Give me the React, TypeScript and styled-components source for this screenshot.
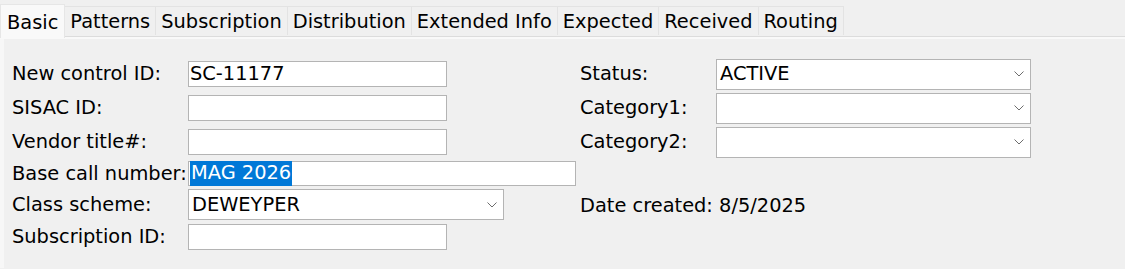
import { createGlobalStyle } from 'styled-components';
import styled from 'styled-components';

const GlobalStyle = createGlobalStyle`
  html, body {
    margin: 0;
    padding: 0;
    background: #f0f0f0;
  }
  body {
    font-family: 'DejaVu Sans', Verdana, sans-serif;
    font-size: 19.4px;
    color: #000;
  }
`;

const Window = styled.div`
  width: 1125px;
  height: 269px;
  background: #f0f0f0;
  overflow: hidden;
`;

const TabStrip = styled.div`
  display: flex;
  align-items: flex-end;
  height: 36px;
  padding-left: 1px;
`;

const Tab = styled.div<{ $active?: boolean }>`
  height: ${(p) => (p.$active ? 34 : 29)}px;
  margin-bottom: ${(p) => (p.$active ? -2 : 1)}px;
  padding: 2px ${(p) => (p.$active ? 6 : 5)}px 0;
  box-sizing: border-box;
  display: flex;
  align-items: center;
  background: ${(p) => (p.$active ? '#f9f9f9' : '#f0f0f0')};
  border: 1px solid ${(p) => (p.$active ? '#e6e6e6' : '#e3e3e3')};
  border-bottom: none;
  margin-left: -1px;
  position: relative;
  z-index: ${(p) => (p.$active ? 2 : 1)};
  white-space: nowrap;
  line-height: 1;
`;

const Panel = styled.div`
  border-top: 1px solid #dcdcdc;
  box-shadow: inset 0 2px 0 #f9f9f9, inset 4px 0 0 #f7f7f7;
  height: 232px;
  padding: 20px 0 0 12px;
  box-sizing: border-box;
`;

const Form = styled.div`
  display: grid;
  grid-template-columns: 176px 392px 136px 315px;
  grid-template-rows: 34px 34px 34px 29px 33px 32px;
  align-items: center;
`;

const Label = styled.div<{ $col?: number }>`
  grid-column: ${(p) => p.$col ?? 1};
  white-space: nowrap;
  line-height: 1;
`;

const TextBox = styled.div<{ $width: number; $height?: number }>`
  grid-column: 2;
  width: ${(p) => p.$width}px;
  height: ${(p) => p.$height ?? 26}px;
  box-sizing: border-box;
  background: #fff;
  border: 1px solid #b4b4b4;
  padding-left: 1px;
  display: flex;
  align-items: center;
  white-space: nowrap;
  line-height: 1;
`;

const Selected = styled.span`
  background: #0078d7;
  color: #fff;
  padding: 2px 1px 3px 1px;
`;

const Combo = styled.div<{ $col?: number; $width: number }>`
  grid-column: ${(p) => p.$col ?? 2};
  width: ${(p) => p.$width}px;
  height: 31px;
  box-sizing: border-box;
  background: #fff;
  border: 1px solid #b4b4b4;
  display: flex;
  align-items: center;
  justify-content: space-between;
  padding: 0 5px 0 3px;
  line-height: 1;
`;

const Chevron = () => (
  <svg width="12" height="8" viewBox="0 0 12 8">
    <path d="M1.5 1.5 L6 6 L10.5 1.5" fill="none" stroke="#6d6d6d" strokeWidth="1" />
  </svg>
);

const DateText = styled.div`
  grid-column: 3 / span 2;
  white-space: nowrap;
  line-height: 1;
  padding-top: 3px;
`;

const tabs = [
  'Basic',
  'Patterns',
  'Subscription',
  'Distribution',
  'Extended Info',
  'Expected',
  'Received',
  'Routing',
];

export default function App() {
  return (
    <Window>
      <GlobalStyle />
      <TabStrip>
        {tabs.map((t, i) => (
          <Tab key={t} $active={i === 0}>
            {t}
          </Tab>
        ))}
      </TabStrip>
      <Panel>
        <Form>
          <Label>New control ID:</Label>
          <TextBox $width={259}>SC-11177</TextBox>
          <Label $col={3}>Status:</Label>
          <Combo $col={4} $width={315}>
            <span>ACTIVE</span>
            <Chevron />
          </Combo>

          <Label>SISAC ID:</Label>
          <TextBox $width={259} />
          <Label $col={3}>Category1:</Label>
          <Combo $col={4} $width={315}>
            <span />
            <Chevron />
          </Combo>

          <Label>Vendor title#:</Label>
          <TextBox $width={259} />
          <Label $col={3}>Category2:</Label>
          <Combo $col={4} $width={315}>
            <span />
            <Chevron />
          </Combo>

          <Label>Base call number:</Label>
          <TextBox $width={388} $height={25}>
            <Selected>MAG 2026</Selected>
          </TextBox>
          <div style={{ gridColumn: '3 / span 2' }} />

          <Label>Class scheme:</Label>
          <Combo $width={316}>
            <span>DEWEYPER</span>
            <Chevron />
          </Combo>
          <DateText>Date created: 8/5/2025</DateText>

          <Label>Subscription ID:</Label>
          <TextBox $width={259} />
        </Form>
      </Panel>
    </Window>
  );
}
